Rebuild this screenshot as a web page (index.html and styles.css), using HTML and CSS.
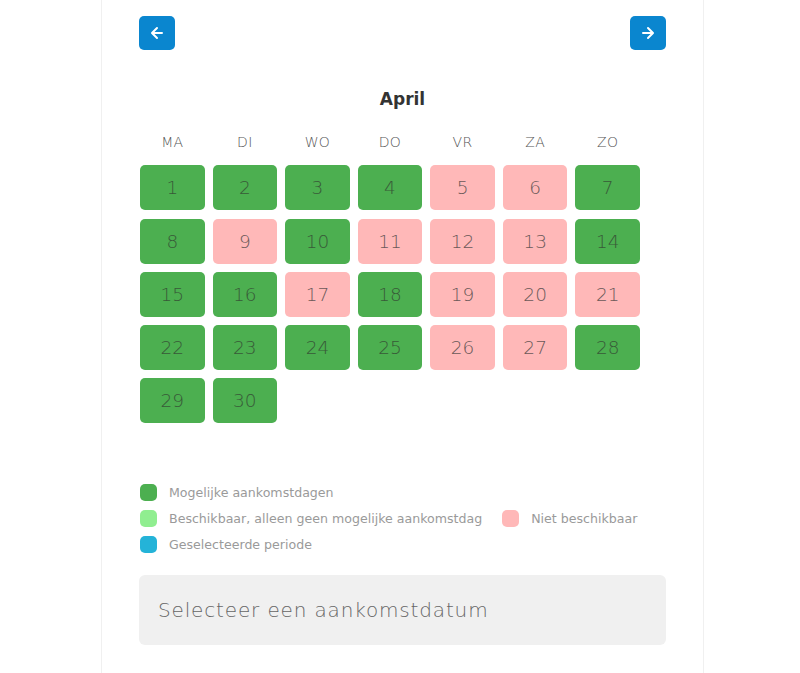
FILE: index.html
```html
<!DOCTYPE html>
<html lang="nl">
<head>
<meta charset="utf-8">
<title>Kalender</title>
<link rel="stylesheet" href="styles.css">
</head>
<body>
<div class="card">
  <div class="nav">
    <button class="nav-btn" aria-label="Vorige maand">
      <svg width="16" height="16" viewBox="0 0 16 16"><path d="M13 8H3.5M8 3L3 8l5 5" fill="none" stroke="#fff" stroke-width="2" stroke-linecap="round" stroke-linejoin="round"/></svg>
    </button>
    <button class="nav-btn" aria-label="Volgende maand">
      <svg width="16" height="16" viewBox="0 0 16 16"><path d="M3 8h9.5M8 3l5 5-5 5" fill="none" stroke="#fff" stroke-width="2" stroke-linecap="round" stroke-linejoin="round"/></svg>
    </button>
  </div>
  <div class="month">April</div>
  <div class="grid">
    <div class="wd">MA</div><div class="wd">DI</div><div class="wd">WO</div><div class="wd">DO</div><div class="wd">VR</div><div class="wd">ZA</div><div class="wd">ZO</div>
    <div class="day ok">1</div><div class="day ok">2</div><div class="day ok">3</div><div class="day ok">4</div><div class="day no">5</div><div class="day no">6</div><div class="day ok">7</div>
    <div class="day ok">8</div><div class="day no">9</div><div class="day ok">10</div><div class="day no">11</div><div class="day no">12</div><div class="day no">13</div><div class="day ok">14</div>
    <div class="day ok">15</div><div class="day ok">16</div><div class="day no">17</div><div class="day ok">18</div><div class="day no">19</div><div class="day no">20</div><div class="day no">21</div>
    <div class="day ok">22</div><div class="day ok">23</div><div class="day ok">24</div><div class="day ok">25</div><div class="day no">26</div><div class="day no">27</div><div class="day ok">28</div>
    <div class="day ok">29</div><div class="day ok">30</div>
  </div>
  <div class="legend">
    <div class="legend-col">
      <div class="item"><span class="sw sw-ok"></span>Mogelijke aankomstdagen</div>
      <div class="item"><span class="sw sw-avail"></span>Beschikbaar, alleen geen mogelijke aankomstdag</div>
      <div class="item"><span class="sw sw-sel"></span>Geselecteerde periode</div>
    </div>
    <div class="legend-col center">
      <div class="item"><span class="sw sw-no"></span>Niet beschikbaar</div>
    </div>
  </div>
  <div class="field">Selecteer een aankomstdatum</div>
</div>
</body>
</html>
```
FILE: styles.css
```css
* { box-sizing: border-box; }
html, body { margin: 0; padding: 0; background: #fff; }
body {
  font-family: "DejaVu Sans", "Noto Sans", sans-serif;
  color: #444;
}
.card {
  width: 603px;
  margin: 0 0 0 101px;
  min-height: 673px;
  border-left: 1px solid #f0f0f0;
  border-right: 1px solid #f0f0f0;
  padding: 16px 37px 0 37px;
}
.nav { display: flex; justify-content: space-between; }
.nav-btn {
  width: 36px; height: 34px;
  border: 0; border-radius: 5px;
  background: #0a86cf;
  display: flex; align-items: center; justify-content: center;
  padding: 0;
}
.month {
  text-align: center;
  font-size: 17px;
  font-weight: 600;
  color: #333;
  margin-top: 38px;
  line-height: 22px;
}
.grid {
  width: 500px;
  margin-left: 1px;
  display: grid;
  grid-template-columns: repeat(7, 1fr);
  column-gap: 8px;
  row-gap: 8.25px;
  margin-top: 23px;
}
.wd {
  text-align: center;
  font-size: 14px;
  color: #555;
  line-height: 18px;
  margin-bottom: 6px;
  font-weight: 300;
  letter-spacing: 0.3px;
}
.day {
  height: 45px;
  border-radius: 5px;
  display: flex; align-items: center; justify-content: center;
  font-size: 18.5px;
  font-weight: 300;
  color: #555;
}
.day.ok { background: #4caf50; color: #385a38; }
.day.no { background: #ffb8b8; color: #6b5858; }
.legend {
  display: flex;
  gap: 20px;
  margin-top: 61px;
  margin-left: 1px;
}
.legend-col { display: flex; flex-direction: column; gap: 9px; }
.legend-col.center { justify-content: center; }
.item {
  display: flex; align-items: center;
  font-size: 12.6px;
  color: #9a9a9a;
  line-height: 17px;
}
.sw {
  width: 17px; height: 17px;
  border-radius: 5px;
  margin-right: 12px;
  flex: none;
}
.sw-ok { background: #4caf50; }
.sw-avail { background: #90ee90; }
.sw-sel { background: #24b3d8; }
.sw-no { background: #ffb8b8; }
.field {
  margin-top: 22px;
  height: 70px;
  background: #f0f0f0;
  border-radius: 6px;
  display: flex; align-items: center;
  padding-left: 19px;
  font-size: 20px;
  letter-spacing: 0.85px;
  color: #666;
  font-weight: 300;
}
```
